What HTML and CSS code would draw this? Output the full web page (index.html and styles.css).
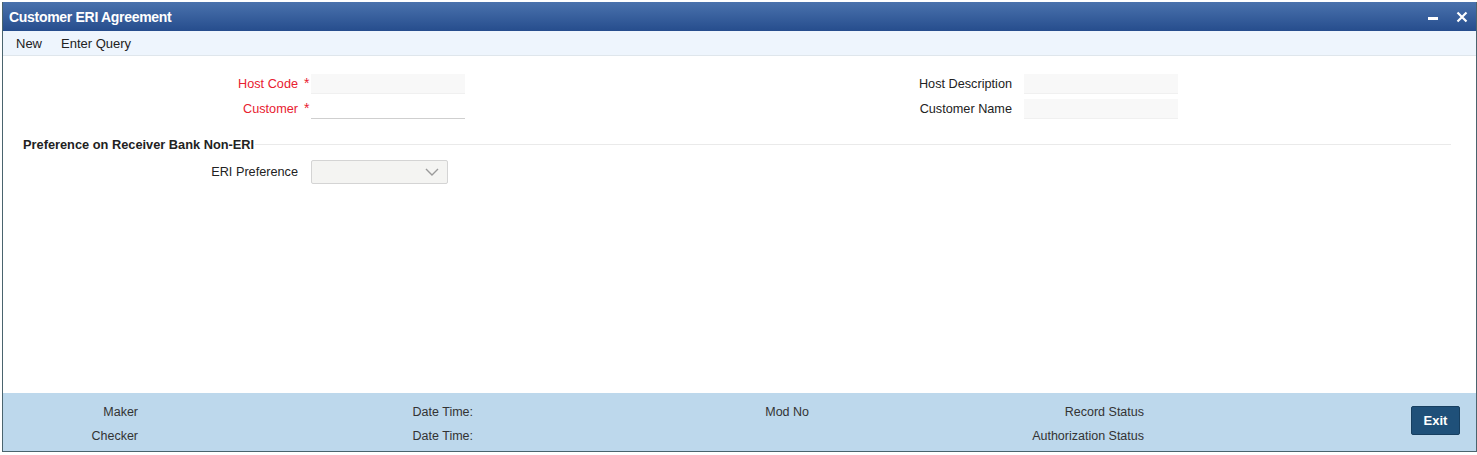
FILE: index.html
```html
<!DOCTYPE html>
<html lang="en">

<head>
    <meta charset="UTF-8">
    <meta name="viewport" content="width=device-width, initial-scale=1.0">
    <title>Customer ERI Agreement</title>
    <link rel="stylesheet" href="styles.css">
</head>

<body>
    <div class="window">
        <div class="title-bar">
            <span class="title">Customer ERI Agreement</span>
            <div class="win-buttons">
                <span class="win-min"></span>
                <svg class="win-close" width="12" height="12" viewBox="0 0 12 12">
                    <path d="M1.5 1.5 L10.5 10.5 M10.5 1.5 L1.5 10.5" stroke="#fff" stroke-width="2.2" />
                </svg>
            </div>
        </div>

        <div class="toolbar">
            <span class="tool">New</span>
            <span class="tool">Enter Query</span>
        </div>

        <div class="content">
            <div class="form-row">
                <div class="field">
                    <label class="label required">Host Code</label>
                    <span class="marker">*</span>
                    <span class="input filled"></span>
                </div>
                <div class="field right">
                    <label class="label">Host Description</label>
                    <span class="marker"></span>
                    <span class="input filled"></span>
                </div>
            </div>
            <div class="form-row">
                <div class="field">
                    <label class="label required">Customer</label>
                    <span class="marker">*</span>
                    <span class="input underline"></span>
                </div>
                <div class="field right">
                    <label class="label">Customer Name</label>
                    <span class="marker"></span>
                    <span class="input filled"></span>
                </div>
            </div>

            <div class="section">
                <span class="section-title">Preference on Receiver Bank Non-ERI</span>
                <span class="section-line"></span>
            </div>

            <div class="form-row select-row">
                <div class="field">
                    <label class="label">ERI Preference</label>
                    <span class="marker"></span>
                    <div class="select">
                        <svg width="14" height="8" viewBox="0 0 14 8">
                            <path d="M1 1 L7 7 L13 1" fill="none" stroke="#9a9a9a" stroke-width="1.4" />
                        </svg>
                    </div>
                </div>
            </div>
        </div>

        <div class="footer">
            <span class="f-label">Maker</span>
            <span class="f-label">Date Time:</span>
            <span class="f-label">Mod No</span>
            <span class="f-label">Record Status</span>
            <button class="exit">Exit</button>
            <span class="f-label">Checker</span>
            <span class="f-label">Date Time:</span>
            <span class="f-label"></span>
            <span class="f-label">Authorization Status</span>
        </div>
    </div>
</body>

</html>
```

FILE: styles.css
```css
body {
    margin: 0;
    font-family: "Liberation Sans", Arial, sans-serif;
    font-size: 13px;
    color: #222;
    background: #fff;
}

.window {
    margin: 2px 0 0 2px;
    width: 1473px;
    height: 449px;
    border: 1px solid #4a646e;
    border-top: none;
    display: flex;
    flex-direction: column;
}

.title-bar {
    height: 29px;
    background: linear-gradient(#4a72ad, #264d8d);
    color: #fff;
    display: flex;
    justify-content: space-between;
    align-items: center;
    padding: 0 8px 0 6px;
}

.title {
    font-size: 14px;
    font-weight: bold;
    letter-spacing: -0.3px;
}

.win-buttons {
    display: flex;
    align-items: center;
    gap: 18px;
}

.win-min {
    width: 10px;
    height: 3px;
    background: #fff;
    margin-top: 3px;
}

.toolbar {
    height: 24px;
    background: #eef5fd;
    border-bottom: 1px solid #dfe6ec;
    display: flex;
    align-items: center;
    padding-left: 13px;
    gap: 19px;
}

.tool {
    font-size: 13px;
    color: #222;
}

.content {
    flex: 1;
    background: #fff;
    padding-top: 18px;
}

.form-row {
    display: flex;
    height: 20px;
    margin-bottom: 5px;
}

.field {
    display: flex;
    align-items: center;
}

.field.right {
    margin-left: 347px;
}

.label {
    width: 295px;
    text-align: right;
    font-size: 12.7px;
}

.field.right .label {
    width: 200px;
}

.required {
    color: #e8202f;
}

.marker {
    width: 13px;
    color: #e8202f;
    padding-left: 6px;
    box-sizing: border-box;
    font-size: 14px;
    align-self: flex-start;
    margin-top: 1px;
}

.field.right .marker {
    width: 12px;
}

.input {
    width: 154px;
    height: 20px;
    box-sizing: border-box;
}

.input.filled {
    background: #f8f8f8;
    border-bottom: 1px solid #f0f0f0;
}

.input.underline {
    background: #fff;
    border-bottom: 1px solid #cfcfcf;
}

.section {
    display: flex;
    align-items: center;
    padding: 11px 25px 0 20px;
    height: 18px;
}

.section-title {
    font-weight: bold;
    font-size: 12.8px;
    color: #222;
}

.section-line {
    flex: 1;
    height: 1px;
    background: #eaeaea;
    margin-left: 1px;
}

.select-row {
    margin-top: 7px;
    height: 24px;
}

.select {
    width: 137px;
    height: 24px;
    box-sizing: border-box;
    background: #f4f4f2;
    border: 1px solid #d4d4d4;
    border-radius: 2px;
    display: flex;
    align-items: center;
    justify-content: flex-end;
    padding-right: 8px;
}

.footer {
    height: 58px;
    background: #bdd8ec;
    box-sizing: border-box;
    padding-top: 7px;
    display: grid;
    grid-template-columns: 135px 335px 336px 335px 1fr;
    grid-template-rows: 24px 24px;
}

.f-label {
    text-align: right;
    line-height: 24px;
    color: #333;
    font-size: 12.5px;
}

.exit {
    grid-column: 5;
    grid-row: 1 / span 2;
    align-self: center;
    justify-self: start;
    margin: -7px 0 0 267px;
    width: 49px;
    height: 29px;
    background: #1f5079;
    color: #fff;
    border: 1px solid #173f60;
    border-radius: 2px;
    font-family: "Liberation Sans", Arial, sans-serif;
    font-weight: bold;
    font-size: 13px;
    padding: 0;
}
```
